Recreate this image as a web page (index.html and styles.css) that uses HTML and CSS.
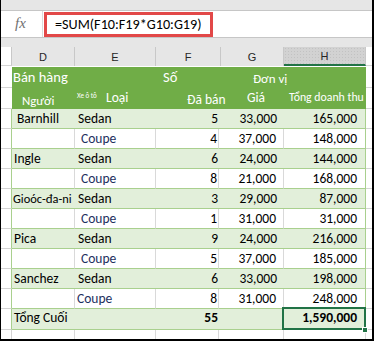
FILE: index.html
```html
<!DOCTYPE html>
<html lang="vi">
<head>
<meta charset="utf-8">
<link rel="stylesheet" href="styles.css">
</head>
<body>
<div class="frame">
  <div class="topband"></div>
  <div class="fbar">
    <div class="fx">fx</div>
    <div class="formula">=SUM(F10:F19*G10:G19)</div>
  </div>
  <div class="gap"></div>
  <div class="row colhead">
    <div class="rh"></div>
    <div class="ch">D</div>
    <div class="ch">E</div>
    <div class="ch">F</div>
    <div class="ch">G</div>
    <div class="ch sel">H</div>
    <div class="ext"></div>
  </div>
  <div class="whiteline"></div>
  <div class="row hdr hdr1">
    <div class="rh"></div>
    <div class="c h-ban">Bán hàng</div>
    <div class="c"></div>
    <div class="c h-so">Số</div>
    <div class="c h-don">Đơn vị</div>
    <div class="c"></div>
    <div class="ext"></div>
  </div>
  <div class="row hdr hdr2">
    <div class="rh"></div>
    <div class="c h-nguoi">Người</div>
    <div class="c h-loai"><span class="tiny">Xe ô tô</span><span class="loai">Loại</span></div>
    <div class="c h-daban">Đã bán</div>
    <div class="c h-gia">Giá</div>
    <div class="c h-tong">Tổng doanh thu</div>
    <div class="ext"></div>
  </div>

  <div class="row band">
    <div class="rh"></div>
    <div class="c name ind">Barnhill</div>
    <div class="c type">Sedan</div>
    <div class="c nf">5</div>
    <div class="c ng">33,000</div>
    <div class="c nh">165,000</div>
    <div class="ext"></div>
  </div>
  <div class="row plain">
    <div class="rh"></div>
    <div class="c name"></div>
    <div class="c type coupe">Coupe</div>
    <div class="c nf">4</div>
    <div class="c ng">37,000</div>
    <div class="c nh">148,000</div>
    <div class="ext"></div>
  </div>
  <div class="row band">
    <div class="rh"></div>
    <div class="c name">Ingle</div>
    <div class="c type">Sedan</div>
    <div class="c nf">6</div>
    <div class="c ng">24,000</div>
    <div class="c nh">144,000</div>
    <div class="ext"></div>
  </div>
  <div class="row plain">
    <div class="rh"></div>
    <div class="c name"></div>
    <div class="c type coupe">Coupe</div>
    <div class="c nf">8</div>
    <div class="c ng">21,000</div>
    <div class="c nh">168,000</div>
    <div class="ext"></div>
  </div>
  <div class="row band">
    <div class="rh"></div>
    <div class="c name narrow">Gioóc-đa-ni</div>
    <div class="c type">Sedan</div>
    <div class="c nf">3</div>
    <div class="c ng">29,000</div>
    <div class="c nh">87,000</div>
    <div class="ext"></div>
  </div>
  <div class="row plain">
    <div class="rh"></div>
    <div class="c name"></div>
    <div class="c type coupe">Coupe</div>
    <div class="c nf">1</div>
    <div class="c ng">31,000</div>
    <div class="c nh">31,000</div>
    <div class="ext"></div>
  </div>
  <div class="row band">
    <div class="rh"></div>
    <div class="c name">Pica</div>
    <div class="c type">Sedan</div>
    <div class="c nf">9</div>
    <div class="c ng">24,000</div>
    <div class="c nh">216,000</div>
    <div class="ext"></div>
  </div>
  <div class="row plain">
    <div class="rh"></div>
    <div class="c name"></div>
    <div class="c type coupe">Coupe</div>
    <div class="c nf">5</div>
    <div class="c ng">37,000</div>
    <div class="c nh">185,000</div>
    <div class="ext"></div>
  </div>
  <div class="row band">
    <div class="rh"></div>
    <div class="c name">Sanchez</div>
    <div class="c type">Sedan</div>
    <div class="c nf">6</div>
    <div class="c ng">33,000</div>
    <div class="c nh">198,000</div>
    <div class="ext"></div>
  </div>
  <div class="row plain">
    <div class="rh"></div>
    <div class="c name"></div>
    <div class="c type coupe last">Coupe</div>
    <div class="c nf">8</div>
    <div class="c ng">31,000</div>
    <div class="c nh">248,000</div>
    <div class="ext"></div>
  </div>
  <div class="row band total">
    <div class="rh"></div>
    <div class="c name">Tổng Cuối</div>
    <div class="c type"></div>
    <div class="c nf bold">55</div>
    <div class="c ng"></div>
    <div class="c nh bold selected">1,590,000<span class="handle"></span></div>
    <div class="ext"></div>
  </div>
  <div class="row tail">
    <div class="rh"></div>
    <div class="c"></div>
    <div class="c"></div>
    <div class="c"></div>
    <div class="c"></div>
    <div class="c"></div>
    <div class="ext"></div>
  </div>
</div>
</body>
</html>
```

FILE: styles.css
```css
* { box-sizing: border-box; }
body { margin: 0; background: #fff; }

.frame {
  width: 374px;
  height: 341px;
  border-left: 1px solid #000;
  border-right: 2px solid #000;
  border-bottom: 2px solid #000;
  background: #e6e6e6;
  display: flex;
  flex-direction: column;
  overflow: hidden;
  font-family: Carlito, "Liberation Sans Narrow", "Liberation Sans", sans-serif;
  color: #000;
}

.topband { height: 11px; flex: none; border-bottom: 1px solid #c6c6c6; }

.fbar {
  height: 27px;
  flex: none;
  background: #fff;
  border-bottom: 1px solid #c6c6c6;
  display: flex;
}
.fx {
  width: 42px;
  border-right: 1px solid #dcdcdc;
  font-family: "Liberation Serif", serif;
  font-style: italic;
  font-size: 15px;
  color: #707070;
  display: flex;
  align-items: center;
  padding-left: 14px;
  padding-bottom: 1px;
}
.formula {
  margin: 1px 0 0 1px;
  width: 169px;
  height: 25px;
  border: 3px solid #e24848;
  font-size: 14.2px;
  line-height: 19px;
  padding-left: 8px;
  white-space: nowrap;
}

.gap { height: 9px; flex: none; }

.row {
  display: grid;
  grid-template-columns: 11px 63px 81px 63px 65px 82px 1fr;
  flex: none;
}

.colhead {
  height: 19px;
  grid-template-columns: 11px 63px 81px 65px 63px 82px 1fr;
  font-family: "Liberation Sans", sans-serif;
  font-size: 11px;
  color: #262626;
}
.colhead .rh { border-right: 1px solid #c8c8c8; }
.ch {
  border-right: 1px solid #c8c8c8;
  display: flex;
  align-items: center;
  justify-content: center;
  padding-top: 1px;
}
.ch.sel {
  background-color: #d2d2d2;
  background-image: radial-gradient(#c2c2c2 0.6px, transparent 0.8px);
  background-size: 3px 3px;
  border-bottom: 2px solid #217346;
}

.whiteline { height: 1px; background: #fff; flex: none; }

.rh { background: #fff; border-bottom: 1px solid #d4d4d4; border-right: 1px solid #a9d08e; }
.ext { background: #fff; border-bottom: 1px solid #d4d4d4; }

.c {
  display: flex;
  align-items: flex-end;
  white-space: nowrap;
  font-size: 13.5px;
  line-height: 14px;
  padding-bottom: 2px;
}

/* header rows */
.hdr { height: 21px; color: #fff; }
.hdr .c { background: #70ad47; }
.hdr .rh { border-right: none; }
.hdr1 .c { font-size: 14.5px; padding-bottom: 4px; }
.h-ban { padding-left: 1px; }
.h-so { padding-left: 7px; }
.h-don {
  padding-left: 34px;
  font-size: 13px !important;
  padding-bottom: 2px !important;
  position: relative;
  z-index: 1;
}
.hdr2 .c { font-size: 13.5px; }
.h-nguoi { padding-left: 10px; font-size: 12.8px !important; padding-bottom: 1px !important; }
.h-loai { padding-left: 2px; padding-bottom: 4px !important; }
.tiny { font-size: 7px; line-height: 8px; margin-bottom: 5px; width: 29px; }
.loai { font-size: 13.5px; }
.h-daban { padding-left: 31px; padding-bottom: 2px !important; position: relative; z-index: 1; }
.h-gia { padding-left: 28px; padding-bottom: 4px !important; }
.h-tong { padding-left: 5px; font-size: 11.8px !important; padding-bottom: 5px !important; overflow: hidden; }

/* body rows */
.band, .plain { height: 20px; }
.band .c, .plain .c { border-bottom: 1px solid #a9d08e; }
.band .c { background: #e2efda; }
.plain .c { background: #fff; border-right: 1px solid #d9d9d9; }
.plain .c.nh { border-right: 1px solid #a9d08e; }
.band .c.nh { border-right: 1px solid #a9d08e; }

.name { padding-left: 2px; }
.name.ind { padding-left: 5px; }
.name.narrow { padding-left: 1px; font-size: 12.4px; }
.type { padding-left: 3px; }
.coupe { padding-left: 6px; color: #1d2f5e; }
.coupe.last { padding-left: 2px; }
.nf, .ng, .nh { justify-content: flex-end; }
.nf { padding-right: 1px; }
.ng { padding-right: 7px; }
.nh { padding-right: 8px; }
.bold { font-weight: bold; }

.total { height: 21px; }
.total .c { padding-bottom: 4px; }

.selected { position: relative; }
.selected::after {
  content: "";
  position: absolute;
  left: -2px;
  top: -2px;
  right: -1px;
  bottom: -1px;
  border: 2px solid #217346;
}
.handle {
  position: absolute;
  right: -3px;
  bottom: -4px;
  width: 6px;
  height: 6px;
  background: #217346;
  border: 1px solid #fff;
  z-index: 2;
}

.tail { height: 9px; }
.tail .c { background: #fff; border-right: 1px solid #d9d9d9; }
.tail .rh { border-right: 1px solid #d4d4d4; border-bottom: none; }
.tail .ext { border-bottom: none; }
```
